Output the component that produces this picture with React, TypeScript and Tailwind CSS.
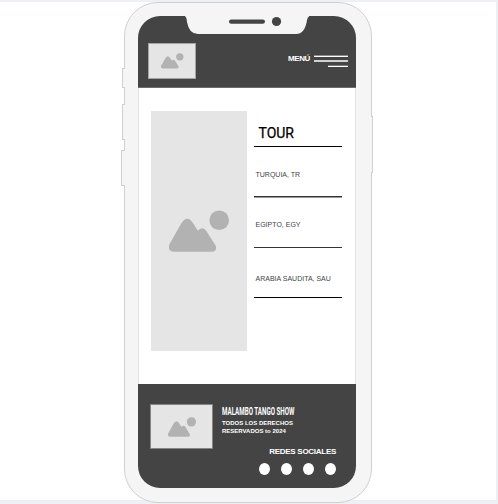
import React from 'react';

const SANS = "font-['Liberation_Sans',Arial,sans-serif]";

function Landscape({ className }: { className: string }) {
  return (
    <svg className={className} viewBox="0 0 60 42" preserveAspectRatio="none" fill="#b2b2b2">
      <circle cx="50.2" cy="10.2" r="9.8" />
      <path d="M5 41.7 Q-1.8 41 .3 34.6 L12.5 13 Q18.3 4.5 24 13 L28.8 20.8 Q33 15.8 37 20.6 L46.6 35.6 Q48.5 40.8 43.5 41.7 Z" />
    </svg>
  );
}

function TourItem({ label, className }: { label: string; className: string }) {
  return (
    <li className={`flex border-b text-[7px] leading-[8px] text-[#444] ${className}`}>
      <span className="ml-[1.5px] whitespace-nowrap">{label}</span>
    </li>
  );
}

function Header() {
  return (
    <header className="relative flex h-[72px] justify-between border-b border-[#6b6b6b] bg-[#444] pl-[10px] pr-[8px]">
      <svg className="absolute left-[47px] top-0 h-[19px] w-[124px]" viewBox="0 0 124 19">
        <path d="M0 0 H124 V.5 Q122.5 1 122 4 Q120 18 111 18 H13 Q4 18 2 6 Q1.5 .5 0 .5 Z" fill="#f5f5f5" />
        <rect x="44" y="3.4" width="36" height="4.4" rx="2.2" fill="#444" />
        <circle cx="91.5" cy="5.5" r="4.6" fill="#444" />
      </svg>
      <div className="mt-[27px] flex h-[36px] w-[48px] border border-[#a5a5a5] bg-[#e5e5e5] pl-[12px] pt-[9px]">
        <Landscape className="h-[15.5px] w-[22.5px]" />
      </div>
      <div className="mt-[37px] flex gap-[3.5px]">
        <span className="mt-[0.5px] whitespace-nowrap text-[8px] font-bold leading-[10px] tracking-[-0.4px] text-white">MENÚ</span>
        <div className="mt-[2px] flex w-[34.5px] flex-col items-end gap-[3px]">
          <i className="h-[2px] w-full border-t border-[#8a8a8a] bg-white" />
          <i className="h-[2px] w-full bg-[#ced3d0]" />
          <i className="h-[2px] w-[20px] border-t border-[#777] bg-white" />
        </div>
      </div>
    </header>
  );
}

function Footer() {
  return (
    <footer className="flex h-[104px] flex-col bg-[#444] text-white">
      <div className="flex pl-[12px] pt-[20px]">
        <div className="flex h-[45px] w-[63px] shrink-0 border border-[#858585] bg-[#e5e5e5] pl-[17px] pt-[12px]">
          <Landscape className="h-[20px] w-[28px]" />
        </div>
        <div className="ml-[9px] h-[44px] w-[110px] text-[6px] font-bold leading-[8px]">
          <h2 className="h-[14px] w-[130px] origin-left scale-x-[0.54] whitespace-nowrap font-['Roboto',sans-serif] text-[11.5px] font-bold leading-[14px]">MALAMBO TANGO SHOW</h2>
          <p className="mt-px whitespace-nowrap">TODOS LOS DERECHOS</p>
          <p className="whitespace-nowrap">RESERVADOS to 2024</p>
        </div>
      </div>
      <div className="flex flex-col items-end pr-[20px]">
        <p className="mt-[-2px] whitespace-nowrap text-[8px] font-bold leading-[10px] tracking-[-0.28px]">REDES SOCIALES</p>
        <div className="mt-[6px] flex gap-[11px]">
          {[0, 1, 2, 3].map((n) => (
            <span key={n} className="h-[12px] w-[11px] rounded-[50%] bg-white" />
          ))}
        </div>
      </div>
    </footer>
  );
}

export default function App() {
  return (
    <div className={`h-[504px] w-[498px] bg-[#edf0f4] pt-px ${SANS}`}>
      <div className="flex h-[500px] w-[497px] justify-center border-b border-r border-t border-[#eceff1] bg-white">
        <div className="relative h-[501px] w-[248px] shrink-0 rounded-[34px] border border-[#d0d0d0] bg-[#f5f5f5] px-[13px] pt-[13px]">
          <i className="absolute left-[-3px] top-[65px] h-[20px] w-[3px] border-y border-l border-[#d0d0d0] bg-[#f5f5f5]" />
          <i className="absolute left-[-3px] top-[101px] h-[36px] w-[3px] border-y border-l border-[#d0d0d0] bg-[#f5f5f5]" />
          <i className="absolute left-[-4px] top-[147px] h-[36px] w-[4px] border-y border-l border-[#d0d0d0] bg-[#f5f5f5]" />
          <i className="absolute right-[-2px] top-[113px] h-[57px] w-[2px] border-y border-r border-[#d0d0d0] bg-[#f5f5f5]" />
          <div className="h-[472px] w-[218px] overflow-hidden rounded-[22px] bg-white">
            <Header />
            <main className="flex h-[296px] border-x border-[#e3e3e3] pl-[12px] pt-[23px]">
              <div className="flex h-[240px] w-[96px] shrink-0 bg-[#e5e5e5] pl-[18px] pt-[99px]">
                <Landscape className="h-[42px] w-[60px]" />
              </div>
              <section className="ml-[7px] w-[88px]">
                <h1 className="h-[36px] border-b border-black pl-[4.5px] pt-[14px] font-['Roboto',sans-serif] text-[14px] font-normal leading-[17px] text-black [-webkit-text-stroke:0.25px_#000]">TOUR</h1>
                <ul>
                  <TourItem label="TURQUIA, TR" className="h-[50px] border-[#333] pt-[24px] shadow-[0_1px_0_#999]" />
                  <TourItem label="EGIPTO, EGY" className="h-[51px] border-[#333] pt-[24px]" />
                  <TourItem label="ARABIA SAUDITA, SAU" className="h-[50px] border-black pt-[27px]" />
                </ul>
              </section>
            </main>
            <Footer />
          </div>
        </div>
      </div>
    </div>
  );
}
